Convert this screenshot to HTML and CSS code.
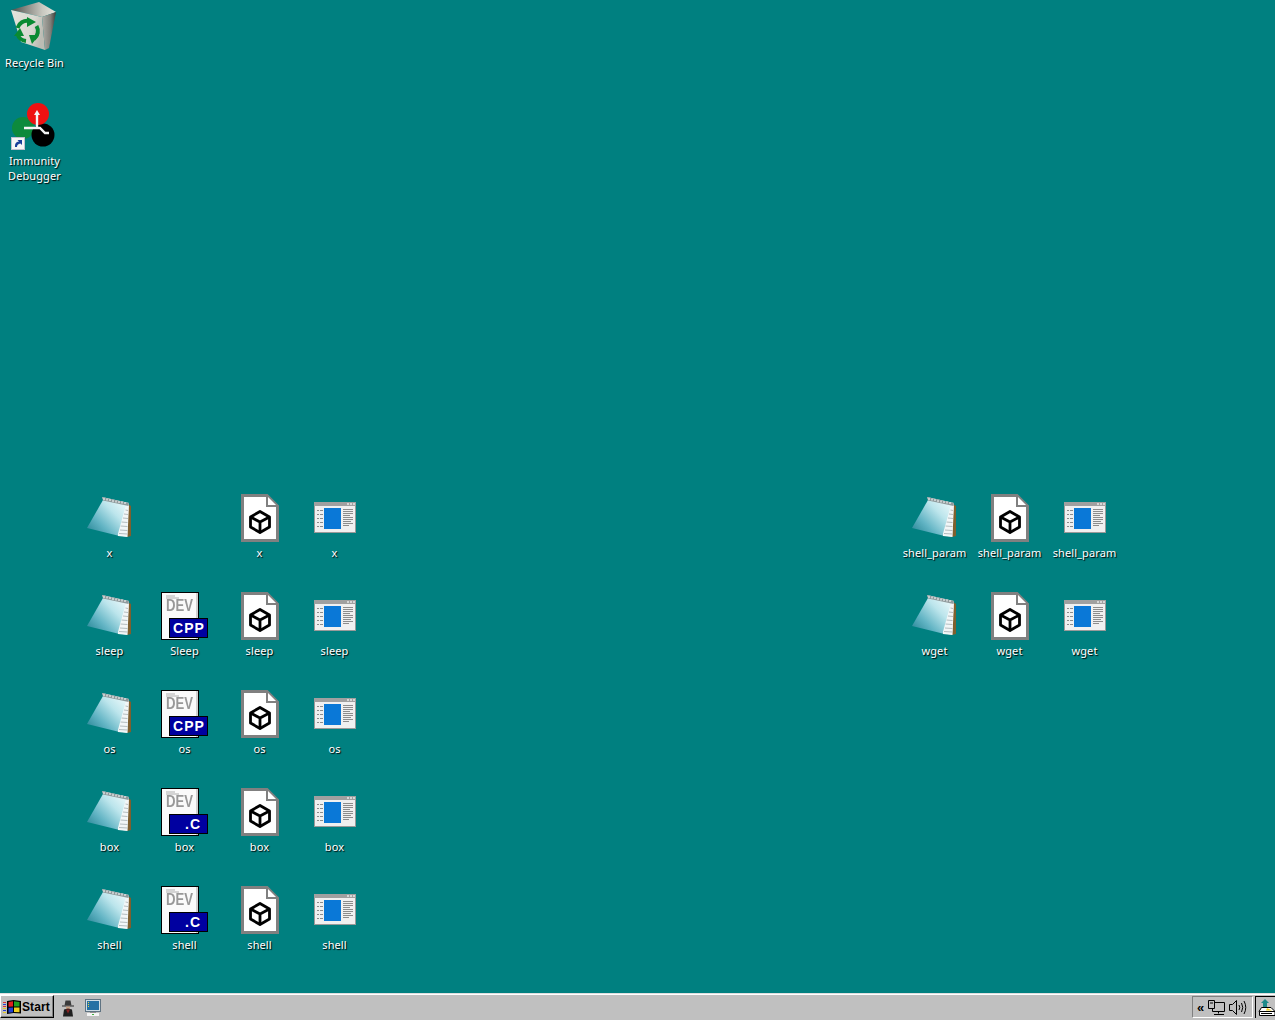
FILE: index.html
```html
<!DOCTYPE html>
<html lang="en">
<head>
<meta charset="utf-8">
<title>Desktop</title>
<link rel="stylesheet" href="styles.css">
</head>
<body>
<svg class="defs" width="0" height="0" aria-hidden="true">
  <defs>
    <linearGradient id="padG" x1="0" y1="1" x2="1" y2="0.1">
      <stop offset="0" stop-color="#1f7f8f"/>
      <stop offset="0.35" stop-color="#62b4c4"/>
      <stop offset="0.7" stop-color="#bce5ec"/>
      <stop offset="1" stop-color="#eaf8fa"/>
    </linearGradient>
    <linearGradient id="binFront" x1="0" y1="0" x2="1" y2="0.3">
      <stop offset="0" stop-color="#e4e4dc"/>
      <stop offset="0.7" stop-color="#d8d8d0"/>
      <stop offset="1" stop-color="#bcbcb4"/>
    </linearGradient>
    <linearGradient id="binSide" x1="0" y1="0" x2="1" y2="0">
      <stop offset="0" stop-color="#b0b0aa"/>
      <stop offset="0.6" stop-color="#80807a"/>
      <stop offset="1" stop-color="#3c3c38"/>
    </linearGradient>
    <linearGradient id="binIn" x1="0" y1="0" x2="1" y2="0">
      <stop offset="0" stop-color="#4c4c48"/>
      <stop offset="0.35" stop-color="#8c8c86"/>
      <stop offset="0.7" stop-color="#c8c8c0"/>
      <stop offset="1" stop-color="#e8e8e0"/>
    </linearGradient>
    <filter id="soft" x="-20%" y="-40%" width="140%" height="180%"><feGaussianBlur stdDeviation="0.7"/></filter>

    <symbol id="i-pad" viewBox="0 0 48 48">
      <path d="M42 10 L45 12 L45 42 L41 43 Z" fill="#7f5f2e"/>
      <path d="M16 3 L43 9 L41.500 43 L32 42 Z" fill="#f6f8f8"/>
      <path d="M40 11 L42.500 12 L41 42.500 L32 41.500 Z" fill="#f2f6f7"/>
      <path d="M39.500 16 L42 16.500 M38 20 L42 20.500 M37 24 L42 24.500 M35.500 28 L41.500 28.500 M34.500 32 L41.500 32.500 M34 36 L41.500 36.500 M33 39.500 L41.500 40" stroke="#a3adb0" stroke-width="0.8"/>
      <path d="M17 6 L40 11 L31.500 41.500 L1 34 Z" fill="url(#padG)"/>
      <path d="M16 3 L43 9 L42.500 12 L17 6.500 Z" fill="#8f9a9c"/>
      <path d="M18 4 v2 M21 4.500 v2 M24 5 v2 M27 6 v2 M30 6.500 v2 M33 7 v2 M36 7.500 v2 M39 8 v2" stroke="#fff" stroke-width="1"/>
    </symbol>

    <symbol id="i-exe" viewBox="0 0 48 48">
      <path d="M6.500 1.500 H31 L41.500 12 V46.500 H6.500 Z" fill="#fff" stroke="#808080" stroke-width="3"/>
      <path d="M31 2 V12 H41" fill="#fff" stroke="#808080" stroke-width="2"/>
      <g fill="none" stroke="#000" stroke-width="2.800" stroke-linejoin="round">
        <path d="M24 17.500 L33.500 23 V33 L24 38.500 L14.500 33 V23 Z"/>
        <path d="M14.500 23 L24 28 L33.500 23 M24 28 V38"/>
      </g>
    </symbol>

    <symbol id="i-win" viewBox="0 0 48 48">
      <rect x="3.500" y="8.500" width="41" height="30" fill="#f0f0f0" stroke="#9a9a9a"/>
      <rect x="3" y="8" width="42" height="4" fill="#a0a0a0"/>
      <path d="M36 10 h2 M39 10 h2 M42 10 h2" stroke="#e8e8e8" stroke-width="1.500"/>
      <rect x="13" y="14" width="17" height="21" fill="#0a78d7"/>
      <path d="M6 16.500 h2 M9 16.500 h3 M6 20.500 h2 M9 20.500 h3 M6 24.500 h2 M9 24.500 h3 M6 28.500 h2 M9 28.500 h3 M6 32.500 h2 M9 32.500 h3" stroke="#8c8c8c"/>
      <path d="M32 15.500 h10 M32 17.500 h10 M32 19.500 h10 M32 21.500 h7 M32 23.500 h10 M32 25.500 h10 M32 27.500 h8 M32 29.500 h10 M32 31.500 h6" stroke="#8c8c8c"/>
    </symbol>

    <symbol id="i-dev" viewBox="0 0 48 48">
      <rect x="0.500" y="0.500" width="37" height="47" fill="#fafafa" stroke="#000"/>
      <rect x="35" y="1" width="2" height="46" fill="#d0d0d0"/>
      <path d="M5 4 h9 M5 6 h13" stroke="#b0b0b0" stroke-width="1.200" filter="url(#soft)"/>
      <text x="5" y="19" class="dev-mark" textLength="27" lengthAdjust="spacingAndGlyphs" filter="url(#soft)">DEV</text>
      <path d="M5 23 h12" stroke="#b0b0b0" stroke-width="1.500" filter="url(#soft)"/>
    </symbol>
  </defs>
</svg>

<main class="desktop">
  <section class="icons icons-system">
    <div class="item">
      <svg class="glyph" viewBox="0 0 48 48" aria-hidden="true">
        <path d="M0 8 L28 0 L45 10 L31 15 Z" fill="url(#binIn)"/>
        <path d="M0 8 L31 15 L34 48 L10 40 Z" fill="url(#binFront)"/>
        <path d="M31 15 L45 10 L38 46 L34 48 Z" fill="url(#binSide)"/>
        <g fill="none" stroke="#0a8a32" stroke-width="4">
          <path d="M6.500 26 A 10 10 0 0 1 18 19"/>
          <path d="M25.500 24 A 10 10 0 0 1 23 37"/>
          <path d="M15 39 A 10 10 0 0 1 6.500 32"/>
        </g>
        <path d="M16 15 L25 20 L16 25 Z M28 33 L21 42 L18 33 Z M3 34 L9 26 L13 34 Z" fill="#0a8a32"/>
      </svg>
      <span class="label">Recycle Bin</span>
    </div>
    <div class="item">
      <svg class="glyph" viewBox="0 0 48 48" aria-hidden="true">
        <circle cx="12" cy="28" r="11" fill="#0d8a3c"/>
        <circle cx="32" cy="35" r="11.500" fill="#000"/>
        <circle cx="27" cy="14" r="11" fill="#ee1111"/>
        <path d="M26 15 V28 H13 M26 28 H29 L34 33 H38" fill="none" stroke="#f4f4f4" stroke-width="2.400"/>
        <path d="M26 10 L29 15 H23 Z" fill="#f4f4f4"/>
        <rect x="0.500" y="37.500" width="13" height="12" fill="#f6f6f6" stroke="#c0c0d0"/>
        <path d="M4 47 C4 43 5 42 8 41.500 L6.500 40 H11 V45 L9.500 43.500 C7 44 6 45 6 47 Z" fill="#1a3f9a"/>
      </svg>
      <span class="label">Immunity Debugger</span>
    </div>
  </section>

  <section class="icons icons-left">
    <div class="item"><svg class="glyph"><use href="#i-pad"/></svg><span class="label">x</span></div>
    <div class="item item-empty"></div>
    <div class="item"><svg class="glyph"><use href="#i-exe"/></svg><span class="label">x</span></div>
    <div class="item"><svg class="glyph"><use href="#i-win"/></svg><span class="label">x</span></div>

    <div class="item"><svg class="glyph"><use href="#i-pad"/></svg><span class="label">sleep</span></div>
    <div class="item"><svg class="glyph"><use href="#i-dev"/><rect class="badge" x="8.500" y="26.500" width="38" height="19"/><text class="badge-text" x="28" y="41">CPP</text></svg><span class="label">Sleep</span></div>
    <div class="item"><svg class="glyph"><use href="#i-exe"/></svg><span class="label">sleep</span></div>
    <div class="item"><svg class="glyph"><use href="#i-win"/></svg><span class="label">sleep</span></div>

    <div class="item"><svg class="glyph"><use href="#i-pad"/></svg><span class="label">os</span></div>
    <div class="item"><svg class="glyph"><use href="#i-dev"/><rect class="badge" x="8.500" y="26.500" width="38" height="19"/><text class="badge-text" x="28" y="41">CPP</text></svg><span class="label">os</span></div>
    <div class="item"><svg class="glyph"><use href="#i-exe"/></svg><span class="label">os</span></div>
    <div class="item"><svg class="glyph"><use href="#i-win"/></svg><span class="label">os</span></div>

    <div class="item"><svg class="glyph"><use href="#i-pad"/></svg><span class="label">box</span></div>
    <div class="item"><svg class="glyph"><use href="#i-dev"/><rect class="badge" x="8.500" y="26.500" width="38" height="19"/><text class="badge-text" x="32" y="41">.C</text></svg><span class="label">box</span></div>
    <div class="item"><svg class="glyph"><use href="#i-exe"/></svg><span class="label">box</span></div>
    <div class="item"><svg class="glyph"><use href="#i-win"/></svg><span class="label">box</span></div>

    <div class="item"><svg class="glyph"><use href="#i-pad"/></svg><span class="label">shell</span></div>
    <div class="item"><svg class="glyph"><use href="#i-dev"/><rect class="badge" x="8.500" y="26.500" width="38" height="19"/><text class="badge-text" x="32" y="41">.C</text></svg><span class="label">shell</span></div>
    <div class="item"><svg class="glyph"><use href="#i-exe"/></svg><span class="label">shell</span></div>
    <div class="item"><svg class="glyph"><use href="#i-win"/></svg><span class="label">shell</span></div>
  </section>

  <section class="icons icons-right">
    <div class="item"><svg class="glyph"><use href="#i-pad"/></svg><span class="label">shell_param</span></div>
    <div class="item"><svg class="glyph"><use href="#i-exe"/></svg><span class="label">shell_param</span></div>
    <div class="item"><svg class="glyph"><use href="#i-win"/></svg><span class="label">shell_param</span></div>
    <div class="item"><svg class="glyph"><use href="#i-pad"/></svg><span class="label">wget</span></div>
    <div class="item"><svg class="glyph"><use href="#i-exe"/></svg><span class="label">wget</span></div>
    <div class="item"><svg class="glyph"><use href="#i-win"/></svg><span class="label">wget</span></div>
  </section>
</main>

<footer class="taskbar">
  <button class="start" type="button">
    <svg class="start-logo" viewBox="0 0 18 14" aria-hidden="true">
      <path d="M0 2 h3 v1 h-3 z M0 6 h3 v1 h-3 z" fill="#d33"/>
      <path d="M0 4 h3 v1 h-3 z M0 10 h3 v1 h-3 z" fill="#2a3fd0"/>
      <path d="M0 8 h3 v1 h-3 z M0 12 h3 v1 h-3 z" fill="#e6c820"/>
      <path d="M4 1 L10.500 0 L18 1 V13.500 L10.500 13 L4 14 Z" fill="#000"/>
      <path d="M5.500 2 L10 1.300 V6.500 L5.500 6.800 Z" fill="#e02020"/>
      <path d="M11 1.300 L16.500 2 V6.500 L11 6.500 Z" fill="#20a020"/>
      <path d="M5.500 7.800 L10 7.500 V12.200 L5.500 12.700 Z" fill="#2040d0"/>
      <path d="M11 7.500 L16.500 7.500 V12.300 L11 12 Z" fill="#f0d020"/>
    </svg>
    <span>Start</span>
  </button>
  <div class="quick">
    <svg class="quick-icon" viewBox="0 0 16 17" aria-hidden="true">
      <path d="M1 6 H13 V7 H1 Z" fill="#2a2a2a"/>
      <path d="M3.500 6 L4.500 1 H9.500 L10.500 6 Z" fill="#3a3a3a"/>
      <path d="M5 7 H9 V9.500 H5 Z" fill="#c9a184"/>
      <path d="M2 17 L3 10 L7 9 L11 10 L12 17 Z" fill="#1f1f1f"/>
      <path d="M5 10 L7 14 L9 10 Z" fill="#8a2222"/>
    </svg>
    <svg class="quick-icon" viewBox="0 0 16 18" aria-hidden="true">
      <rect x="0.500" y="0.500" width="15" height="12" fill="#cfdde6" stroke="#5f7382"/>
      <rect x="2" y="2" width="12" height="9" fill="#2470a4"/>
      <path d="M3.500 3 v1 M3.500 5 v1 M3.500 7 v1" stroke="#e8d040"/>
      <path d="M5 13 h6 v1 h-6 z" fill="#909090"/>
      <path d="M2 14 h12 v3 h-12 z" fill="#f4f4f4"/>
      <path d="M7 15.500 h2" stroke="#40b040"/>
    </svg>
  </div>
  <div class="tray">
    <span class="chevron">«</span>
    <svg class="tray-net" viewBox="0 0 18 15" aria-hidden="true">
      <path d="M0.500 0.500 h6 v8 h-6 z M6.500 2.500 h10 v9 h-12 v-3 M10.500 11.500 v2 M6 14.500 h10 M2 3 h3" fill="none" stroke="#000"/>
    </svg>
    <svg class="tray-vol" viewBox="0 0 18 15" aria-hidden="true">
      <path d="M0.500 4.500 h3 l4 -4 v14 l-4 -4 h-3 z" fill="none" stroke="#000"/>
      <path d="M10 5 Q11.500 7.500 10 10 M12.500 3 Q15 7.500 12.500 12 M15 1 Q18.500 7.500 15 14" fill="none" stroke="#000"/>
    </svg>
  </div>
  <div class="tray-app">
    <svg class="tray-app-icon" viewBox="0 0 18 18" aria-hidden="true">
      <path d="M7 0 L11 4 H3 Z" fill="#1f8a8a"/>
      <path d="M5 4 H9 V9 H5 Z" fill="#1f8a8a"/>
      <path d="M3.500 8.500 H13 L17 12.500 H1 Z" fill="#fff" stroke="#000"/>
      <path d="M1.500 12.500 H17 V16.500 H1.500 Z" fill="#fff" stroke="#000"/>
      <path d="M9 9 L14 11.500 L8 11.500 Z" fill="#f0d020"/>
      <path d="M3 14.500 h11" stroke="#000"/>
    </svg>
  </div>
</footer>
</body>
</html>
```

FILE: styles.css
```css
html, body {
  margin: 0;
  height: 100%;
  overflow: hidden;
}

body {
  display: flex;
  flex-direction: column;
  height: 1020px;
  background: #008080;
  font-family: "Noto Sans", "Open Sans", sans-serif;
}

.defs {
  position: absolute;
}

.dev-mark {
  font: bold 16px "Liberation Sans", sans-serif;
  fill: #989898;
}

.desktop {
  position: relative;
  flex: 1;
  min-height: 0;
}

.icons {
  position: absolute;
  display: grid;
  grid-auto-rows: 98px;
}

.icons-system {
  left: -3px;
  top: 2px;
  grid-template-columns: 75px;
}

.icons-system .label {
  margin-top: 5px;
}

.icons-left {
  left: 72px;
  top: 494px;
  grid-template-columns: repeat(4, 75px);
}

.icons-right {
  left: 897px;
  top: 494px;
  grid-template-columns: repeat(3, 75px);
}

.item {
  display: flex;
  flex-direction: column;
  align-items: center;
}

.glyph {
  display: block;
  width: 48px;
  height: 48px;
  overflow: visible;
  flex: none;
}

.label {
  margin-top: 3px;
  width: 72px;
  color: #fff;
  font-size: 11px;
  letter-spacing: 0.1px;
  line-height: 15px;
  text-align: center;
  text-shadow: 1px 1px 1px #000;
}

.badge {
  fill: #0000a0;
  stroke: #000;
}

.badge-text {
  fill: #fff;
  font: bold 14px "Liberation Sans", sans-serif;
  text-anchor: middle;
  letter-spacing: 1px;
}

.taskbar {
  flex: none;
  display: flex;
  align-items: flex-end;
  height: 27px;
  box-sizing: border-box;
  padding: 0 0 2px 0;
  background: #c0c0c0;
  border-top: 1px solid #dfdfdf;
  box-shadow: inset 0 1px 0 #fff;
}

.start {
  display: flex;
  align-items: center;
  gap: 1px;
  height: 23px;
  width: 54px;
  padding: 0 0 0 2px;
  box-sizing: border-box;
  background: #c0c0c0;
  border: 1px solid;
  border-color: #fff #000 #000 #fff;
  box-shadow: inset -1px -1px 0 #808080;
  font: bold 12px "Liberation Sans", sans-serif;
  letter-spacing: 0.1px;
  color: #000;
}

.start-logo {
  width: 18px;
  height: 14px;
  flex: none;
}

.quick {
  display: flex;
  align-items: flex-end;
  gap: 8px;
  margin-left: 7px;
  padding-bottom: 1px;
}

.quick-icon {
  width: 16px;
  height: 18px;
}

.tray {
  display: flex;
  align-items: center;
  margin-left: auto;
  height: 22px;
  width: 61px;
  box-sizing: border-box;
  padding-left: 4px;
  border: 1px solid;
  border-color: #808080 #fff #fff #808080;
}

.chevron {
  font: bold 13px "Liberation Sans", sans-serif;
  width: 11px;
}

.tray-net {
  width: 18px;
  height: 15px;
}

.tray-vol {
  width: 18px;
  height: 15px;
  margin-left: 3px;
}

.tray-app {
  display: flex;
  align-items: center;
  width: 20px;
  height: 22px;
  margin-left: 2px;
  padding-left: 2px;
  box-sizing: border-box;
  border-top: 1px solid #000;
  border-left: 1px solid #000;
}

.tray-app-icon {
  width: 18px;
  height: 18px;
  flex: none;
}
```
